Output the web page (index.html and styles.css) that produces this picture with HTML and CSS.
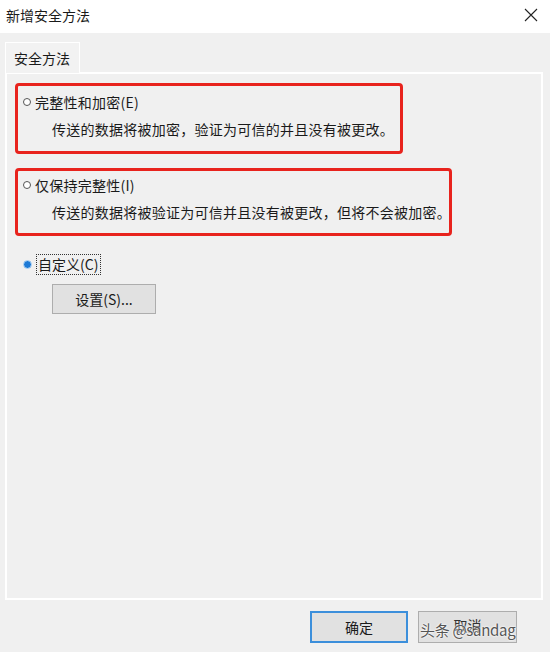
FILE: index.html
```html
<!DOCTYPE html>
<html lang="zh-CN">
<head>
<meta charset="utf-8">
<title>新增安全方法</title>
<link rel="stylesheet" href="styles.css">
</head>
<body>
<div class="dialog">
  <div class="titlebar">
    <span class="title">新增安全方法</span>
    <svg class="close" width="14" height="14" viewBox="0 0 14 14"><path d="M1 1 L13 13 M13 1 L1 13" stroke="#222" stroke-width="1.1" fill="none"/></svg>
  </div>
  <div class="main">
    <div class="tabs"><div class="tab">安全方法</div></div>
    <div class="panel">
      <div class="box box-first">
        <div class="row"><span class="radio"></span><span>完整性和加密(E)</span></div>
        <div class="desc">传送的数据将被加密，验证为可信的并且没有被更改。</div>
      </div>
      <div class="box box-second">
        <div class="row"><span class="radio"></span><span>仅保持完整性(I)</span></div>
        <div class="desc">传送的数据将被验证为可信并且没有被更改，但将不会被加密。</div>
      </div>
      <div class="custom-row"><span class="radio radio-on"></span><span class="focus">自定义(C)</span></div>
      <div class="btn-wrap"><div class="btn btn-settings">设置(S)...</div></div>
    </div>
    <div class="footer">
      <div class="btn btn-ok">确定</div>
      <div class="btn btn-cancel">取消<span class="watermark">头条 @sandag</span></div>
    </div>
  </div>
</div>
</body>
</html>
```
FILE: styles.css
```css
* { box-sizing: border-box; }
html, body { margin: 0; padding: 0; }
body {
  width: 550px;
  height: 652px;
  overflow: hidden;
  background: #f0f0f0;
  font-family: "Noto Sans CJK SC", "Noto Sans", sans-serif;
  font-size: 14px;
  color: #1a1a1a;
}
.titlebar {
  height: 33px;
  background: #fff;
  display: flex;
  align-items: center;
  justify-content: space-between;
  padding: 0 12px 0 6px;
}
.title { font-size: 14px; line-height: 20px; margin-top: -4px; }
.close { margin-top: -4px; }
.main { padding: 9px 7px 0 5px; }
.tabs { display: flex; }
.tab {
  width: 75px;
  height: 31px;
  border: 1px solid #fff;
  border-bottom: none;
  background: #f2f2f2;
  padding-left: 8px;
  line-height: 30px;
  margin-bottom: -1px;
  position: relative;
  z-index: 1;
}
.panel {
  height: 528px;
  border: 2px solid #fff;
  padding: 9px 0 0 8px;
}
.box {
  border: 3px solid #e8231d;
  border-radius: 4px;
  padding: 5px 0 11px 5px;
  letter-spacing: 0.25px;
}
.box-first { width: 388px; }
.box-second { width: 437px; margin-top: 14px; padding-top: 3px; padding-bottom: 10px; }
.row { display: flex; align-items: center; height: 22px; }
.desc { height: 22px; line-height: 22px; margin-top: 5px; padding-left: 29px; white-space: nowrap; }
.radio {
  width: 8px;
  height: 8px;
  border: 1px solid #555;
  border-radius: 50%;
  margin-right: 4px;
  background: #fff;
  flex: none;
}
.radio-on {
  width: 9px;
  height: 9px;
  border: 1px solid #9cc8f0;
  background: radial-gradient(circle, #1e7ad6 0 3px, #5aa1e6 3.5px);
}
.custom-row {
  display: flex;
  align-items: center;
  margin-top: 18px;
  padding-left: 8px;
  height: 21px;
}
.focus {
  border: 1px dotted #333;
  padding: 0 2px 0 1px;
  line-height: 19px;
}
.btn-wrap { padding: 9px 0 0 37px; }
.btn {
  display: flex;
  align-items: center;
  justify-content: center;
  background: #e1e1e1;
  border: 1px solid #adadad;
}
.btn-settings { width: 104px; height: 30px; }
.footer {
  display: flex;
  gap: 10px;
  padding: 11px 0 0 305px;
}
.btn-ok { width: 98px; height: 32px; border: 2px solid #3c8fdb; }
.btn-cancel { width: 99px; height: 32px; position: relative; color: #333; padding-bottom: 4px; }
.watermark {
  position: absolute;
  left: 1px;
  top: 7px;
  font-family: "Noto Sans CJK SC", sans-serif;
  font-size: 15px;
  color: #555;
  white-space: nowrap;
  text-shadow: 0 0 2px #fff, 0 0 2px #fff;
  letter-spacing: -0.3px;
}
```
